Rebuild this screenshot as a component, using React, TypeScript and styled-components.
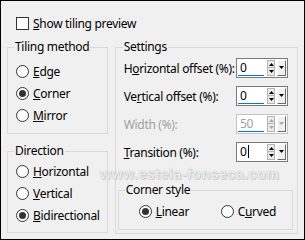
import React from "react";
import styled, { createGlobalStyle } from "styled-components";

const GlobalStyle = createGlobalStyle`
  html, body {
    margin: 0;
    padding: 0;
    background: #ffffff;
  }
`;

const FONT = `"Segoe UI", "Noto Sans", "Open Sans", sans-serif`;

const Frame = styled.div`
  position: relative;
  width: 305px;
  height: 240px;
  box-sizing: border-box;
  border: 1px solid #000;
  background: #f0f0f0;
  padding: 15px 6px 0 6px;
  font-family: ${FONT};
  font-size: 12px;
  letter-spacing: -0.3px;
  white-space: nowrap;
  color: #000;
  overflow: hidden;
`;

const CheckRow = styled.div`
  display: flex;
  align-items: center;
  gap: 4px;
  height: 15px;
  padding-left: 9px;
`;

const CheckBox = styled.span`
  width: 13px;
  height: 13px;
  box-sizing: border-box;
  border: 1px solid #333;
  background: #fff;
`;

const Columns = styled.div`
  display: flex;
  gap: 7px;
  margin-top: 8px;
`;

const LeftCol = styled.div`
  width: 101px;
  display: flex;
  flex-direction: column;
  gap: 9px;
`;

const RightCol = styled.div`
  width: 184px;
  display: flex;
  flex-direction: column;
`;

const Group = styled.fieldset<{ $pt: number; $pb: number; $pl: number; $pr?: number; $mt?: number }>`
  margin: ${(p) => p.$mt ?? 0}px 0 0 0;
  min-width: 0;
  border: 1px solid #dadada;
  padding: ${(p) => p.$pt}px ${(p) => p.$pr ?? 4}px ${(p) => p.$pb}px ${(p) => p.$pl}px;
  display: flex;
  flex-direction: column;
`;

const Legend = styled.legend<{ $ml: number }>`
  padding: 0 1px;
  margin-left: ${(p) => p.$ml}px;
  height: 16px;
  line-height: 16px;
  font-size: 12px;
  color: #000;
`;

const Option = styled.div<{ $w?: number }>`
  display: flex;
  align-items: center;
  gap: 4px;
  height: 22px;
  width: ${(p) => (p.$w ? `${p.$w}px` : "auto")};
`;

const OptionLine = styled.div`
  display: flex;
  align-items: center;
`;

const Radio = styled.span<{ $on?: boolean }>`
  width: 13px;
  height: 13px;
  box-sizing: border-box;
  border: 1px solid #333;
  border-radius: 50%;
  background: #fff;
  display: flex;
  align-items: center;
  justify-content: center;
  flex-shrink: 0;

  &::after {
    content: "";
    width: 7px;
    height: 7px;
    border-radius: 50%;
    background: #333;
    display: ${(p) => (p.$on ? "block" : "none")};
  }
`;

const Rows = styled.div`
  display: flex;
  flex-direction: column;
  gap: 8px;
`;

const Row = styled.div<{ $disabled?: boolean }>`
  display: flex;
  align-items: center;
  justify-content: space-between;
  height: 20px;
  padding: 0 5px 0 6px;
  color: ${(p) => (p.$disabled ? "#a0a0a0" : "#000")};
`;

const Spin = styled.div<{ $disabled?: boolean }>`
  width: 52px;
  height: 20px;
  box-sizing: border-box;
  border: 1px solid ${(p) => (p.$disabled ? "#c4c4c4" : "#7a7a7a")};
  background: #fff;
  padding: 1px;
  display: flex;
  flex-shrink: 0;
`;

const Field = styled.div`
  width: 28px;
  display: flex;
  flex-direction: column;
`;

const Value = styled.div<{ $disabled?: boolean }>`
  height: 15px;
  line-height: 15px;
  padding-left: 2px;
  color: ${(p) => (p.$disabled ? "#a0a0a0" : "#000")};
  display: flex;
  align-items: center;
`;

const Caret = styled.span`
  width: 1px;
  height: 13px;
  background: #000;
  margin-left: 1px;
`;

const Bar = styled.div`
  width: 26px;
  height: 2px;
  background: #0078d7;
`;

const Stepper = styled.div`
  width: 8px;
  margin-left: 1px;
  display: flex;
  flex-direction: column;
`;

const StepButton = styled.div`
  height: 8px;
  box-sizing: border-box;
  border: 1px solid #b4b4b4;
  background: #ececec;
  display: flex;
  align-items: center;
  justify-content: center;

  & + & {
    border-top: none;
  }
`;

const DropButton = styled.div`
  width: 9px;
  margin-left: 2px;
  box-sizing: border-box;
  border-top: 1px solid #fff;
  border-left: 1px solid #fff;
  border-right: 1px solid #696969;
  border-bottom: 1px solid #696969;
  background: #f0f0f0;
  display: flex;
  justify-content: center;
  padding-top: 5px;
`;

const Watermark = styled.div`
  position: absolute;
  left: 99px;
  top: 165px;
  font-family: "Liberation Sans", Arial, sans-serif;
  font-weight: bold;
  font-size: 14px;
  letter-spacing: 0.6px;
  color: #ececec;
  text-shadow: 0 0 1px #b0b0b0, 1px 1px 0 #d2d2d2;
  pointer-events: none;
`;

const Tri = ({ up, color }: { up?: boolean; color: string }) => (
  <svg width="5" height="3" viewBox="0 0 5 3">
    <polygon points={up ? "0,3 5,3 2.5,0" : "0,0 5,0 2.5,3"} fill={color} />
  </svg>
);

interface SpinBoxProps {
  value: string;
  disabled?: boolean;
  bar?: boolean;
  caret?: boolean;
}

function SpinBox({ value, disabled, bar = true, caret }: SpinBoxProps) {
  const c = disabled ? "#a8a8a8" : "#000";
  return (
    <Spin $disabled={disabled}>
      <Field>
        <Value $disabled={disabled}>
          {value}
          {caret && <Caret />}
        </Value>
        {bar && <Bar />}
      </Field>
      <Stepper>
        <StepButton>
          <Tri up color={c} />
        </StepButton>
        <StepButton>
          <Tri color={c} />
        </StepButton>
      </Stepper>
      <DropButton>
        <Tri color={c} />
      </DropButton>
    </Spin>
  );
}

export default function App() {
  return (
    <>
      <GlobalStyle />
      <Frame>
        <CheckRow>
          <CheckBox />
          <span>
            <u>S</u>how tiling preview
          </span>
        </CheckRow>
        <Columns>
          <LeftCol>
            <Group $pt={5} $pb={7} $pl={8}>
              <Legend $ml={-2}>Tiling method</Legend>
              <Option>
                <Radio />
                <span>
                  <u>E</u>dge
                </span>
              </Option>
              <Option>
                <Radio $on />
                <span>
                  <u>C</u>orner
                </span>
              </Option>
              <Option>
                <Radio />
                <span>
                  <u>M</u>irror
                </span>
              </Option>
            </Group>
            <Group $pt={1} $pb={6} $pl={8}>
              <Legend $ml={-2}>Direction</Legend>
              <Option>
                <Radio />
                <span>
                  <u>H</u>orizontal
                </span>
              </Option>
              <Option>
                <Radio />
                <span>
                  <u>V</u>ertical
                </span>
              </Option>
              <Option>
                <Radio $on />
                <span>
                  <u>B</u>idirectional
                </span>
              </Option>
            </Group>
          </LeftCol>
          <RightCol>
            <Group $pt={3} $pb={3} $pl={2}>
              <Legend $ml={5}>Settings</Legend>
              <Rows>
                <Row>
                  <span>
                    H<u>o</u>rizontal offset (%):
                  </span>
                  <SpinBox value="0" />
                </Row>
                <Row>
                  <span>
                    Ve<u>r</u>tical offset (%):
                  </span>
                  <SpinBox value="0" />
                </Row>
                <Row $disabled>
                  <span>Width (%):</span>
                  <SpinBox value="50" disabled />
                </Row>
                <Row>
                  <span>
                    <u>T</u>ransition (%):
                  </span>
                  <SpinBox value="0" bar={false} caret />
                </Row>
              </Rows>
              <Group $pt={2} $pb={7} $pl={20} $pr={4} $mt={20}>
                <Legend $ml={-14}>Corner style</Legend>
                <OptionLine>
                  <Option $w={82}>
                    <Radio $on />
                    <span>
                      <u>L</u>inear
                    </span>
                  </Option>
                  <Option>
                    <Radio />
                    <span>
                      C<u>u</u>rved
                    </span>
                  </Option>
                </OptionLine>
              </Group>
            </Group>
          </RightCol>
        </Columns>
        <Watermark>www.estela-fonseca.com</Watermark>
      </Frame>
    </>
  );
}
